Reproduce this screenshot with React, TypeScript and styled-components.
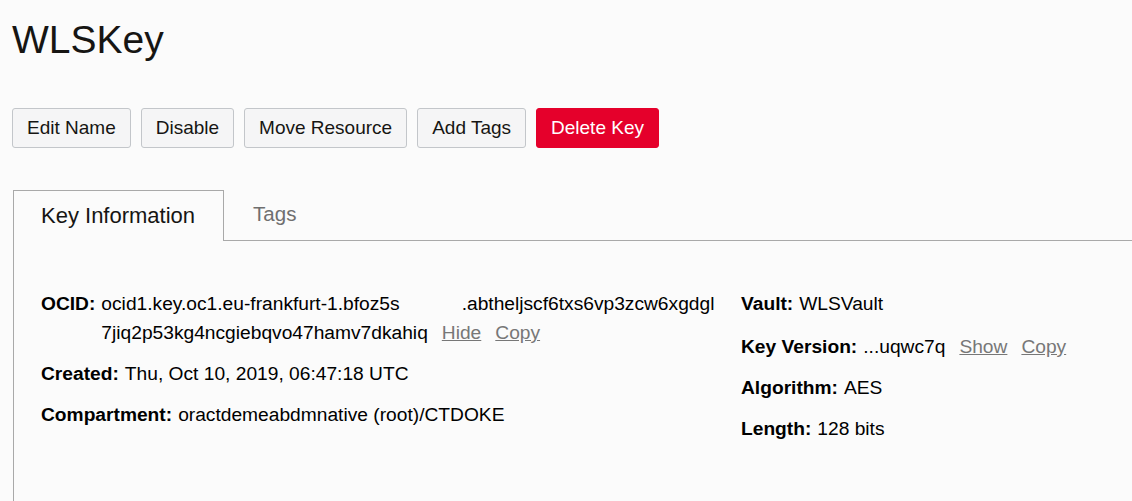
import React from "react";
import styled, { createGlobalStyle } from "styled-components";

const GlobalStyle = createGlobalStyle`
  html, body { margin: 0; padding: 0; background: #fbfbfb; }
  body { font-family: "Liberation Sans", Arial, sans-serif; color: #161513; }
  * { box-sizing: border-box; }
`;

const Page = styled.div`
  min-height: 100vh;
  padding: 0 0 0 12px;
  display: flex;
  flex-direction: column;
  overflow: hidden;
`;

const Title = styled.h1`
  margin: 17px 0 0 0;
  font-size: 39px;
  line-height: 46px;
  font-weight: normal;
  color: #161513;
`;

const Toolbar = styled.div`
  display: flex;
  gap: 10px;
  margin-top: 45px;
`;

const Button = styled.button<{ $danger?: boolean }>`
  height: 40px;
  padding: 0 14px;
  font-family: "Liberation Sans", Arial, sans-serif;
  font-size: 19px;
  border-radius: 3px;
  border: 1px solid ${(p) => (p.$danger ? "#e5002b" : "#c3c6ca")};
  background: ${(p) => (p.$danger ? "#e5002b" : "#f5f5f6")};
  color: ${(p) => (p.$danger ? "#ffffff" : "#161513")};
  cursor: pointer;
`;

const TabContainer = styled.div`
  margin-top: 42px;
  margin-left: 1px;
  border-left: 1px solid #a9a9a9;
  flex: 1;
  display: flex;
  flex-direction: column;
`;

const TabBar = styled.div`
  display: flex;
  border-bottom: 1px solid #a9a9a9;
  height: 51px;
`;

const Tab = styled.div<{ $active?: boolean }>`
  display: flex;
  align-items: center;
  height: ${(p) => (p.$active ? "51px" : "48px")};
  padding: ${(p) => (p.$active ? "0 28px 0 27px" : "0 28px 0 29px")};
  font-size: ${(p) => (p.$active ? "22px" : "20.5px")};
  color: ${(p) => (p.$active ? "#161513" : "#6f6f6f")};
  background: ${(p) => (p.$active ? "#fbfbfb" : "transparent")};
  border-top: ${(p) => (p.$active ? "1px solid #a9a9a9" : "none")};
  border-right: ${(p) => (p.$active ? "1px solid #a9a9a9" : "none")};
  margin-bottom: ${(p) => (p.$active ? "-1px" : "0")};
  cursor: pointer;
`;

const Panel = styled.div`
  display: grid;
  grid-template-columns: 700px 1fr;
  padding: 48px 0 0 27px;
  font-size: 19.2px;
  color: #000;
`;

const Column = styled.div`
  display: flex;
  flex-direction: column;
`;

const Row = styled.div<{ $gap?: number }>`
  display: flex;
  line-height: 29px;
  margin-top: ${(p) => p.$gap ?? 12}px;
  &:first-child { margin-top: 0; }
`;

const Label = styled.span`
  font-weight: bold;
  white-space: nowrap;
  margin-right: 6px;
`;

const Value = styled.span`
  white-space: nowrap;
`;

const Lines = styled.div`
  display: flex;
  flex-direction: column;
`;

const Redacted = styled.span`
  display: inline-block;
  width: 62px;
`;

const Link = styled.a`
  color: #777;
  text-decoration: underline;
  margin-left: 14px;
  cursor: pointer;
`;

export default function App() {
  return (
    <>
      <GlobalStyle />
      <Page>
        <Title>WLSKey</Title>
        <Toolbar>
          <Button>Edit Name</Button>
          <Button>Disable</Button>
          <Button>Move Resource</Button>
          <Button>Add Tags</Button>
          <Button $danger>Delete Key</Button>
        </Toolbar>
        <TabContainer>
          <TabBar>
            <Tab $active>Key Information</Tab>
            <Tab>Tags</Tab>
          </TabBar>
          <Panel>
            <Column>
              <Row>
                <Label>OCID:</Label>
                <Lines>
                  <Value>
                    ocid1.key.oc1.eu-frankfurt-1.bfoz5s<Redacted />.abtheljscf6txs6vp3zcw6xgdgl
                  </Value>
                  <Value>
                    7jiq2p53kg4ncgiebqvo47hamv7dkahiq
                    <Link>Hide</Link>
                    <Link>Copy</Link>
                  </Value>
                </Lines>
              </Row>
              <Row>
                <Label>Created:</Label>
                <Value>Thu, Oct 10, 2019, 06:47:18 UTC</Value>
              </Row>
              <Row>
                <Label>Compartment:</Label>
                <Value>oractdemeabdmnative (root)/CTDOKE</Value>
              </Row>
            </Column>
            <Column>
              <Row>
                <Label>Vault:</Label>
                <Value>WLSVault</Value>
              </Row>
              <Row $gap={14}>
                <Label>Key Version:</Label>
                <Value>
                  ...uqwc7q
                  <Link>Show</Link>
                  <Link>Copy</Link>
                </Value>
              </Row>
              <Row>
                <Label>Algorithm:</Label>
                <Value>AES</Value>
              </Row>
              <Row>
                <Label>Length:</Label>
                <Value>128 bits</Value>
              </Row>
            </Column>
          </Panel>
        </TabContainer>
      </Page>
    </>
  );
}
